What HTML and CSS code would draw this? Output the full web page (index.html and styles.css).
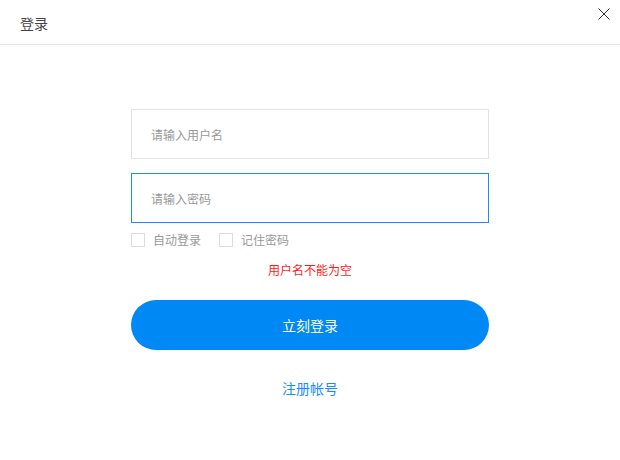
FILE: index.html
```html
<!DOCTYPE html>
<html lang="zh-CN">
<head>
<meta charset="utf-8">
<title>登录</title>
<link rel="stylesheet" href="styles.css">
</head>
<body>
<div class="dialog">
  <header class="dialog-header">
    <span class="dialog-title">登录</span>
    <button class="close-btn" aria-label="关闭">
      <svg width="12" height="12" viewBox="0 0 12 12"><path d="M0.5 0.5L11.5 11.5M11.5 0.5L0.5 11.5" stroke="#333" stroke-width="1" fill="none"/></svg>
    </button>
  </header>
  <form class="login-form">
    <input class="field" type="text" placeholder="请输入用户名">
    <input class="field field-active" type="password" placeholder="请输入密码">
    <div class="options">
      <label class="check"><span class="box"></span>自动登录</label>
      <label class="check"><span class="box"></span>记住密码</label>
    </div>
    <p class="error">用户名不能为空</p>
    <button type="button" class="submit">立刻登录</button>
    <a class="register" href="#">注册帐号</a>
  </form>
</div>
</body>
</html>
```
FILE: styles.css
```css
* { box-sizing: border-box; }
html, body {
  margin: 0;
  padding: 0;
  background: #fff;
  font-family: "Noto Sans CJK SC", "Microsoft YaHei", sans-serif;
}
.dialog {
  width: 620px;
  height: 460px;
  position: relative;
}
.dialog-header {
  height: 45px;
  border-bottom: 1px solid #e6e6e6;
  display: flex;
  align-items: center;
  padding-left: 20px;
}
.dialog-title {
  font-size: 14px;
  color: #444;
  line-height: 20px;
  margin-top: 2px;
}
.close-btn {
  position: absolute;
  top: 8px;
  right: 10px;
  width: 12px;
  height: 12px;
  padding: 0;
  border: 0;
  background: none;
  display: block;
}
.close-btn svg { display: block; }
.login-form {
  width: 358px;
  margin: 64px auto 0;
  display: flex;
  flex-direction: column;
}
.field {
  height: 50px;
  border: 1px solid #e3e3e3;
  padding: 0 0 0 19px;
  font-size: 12px;
  font-family: inherit;
  color: #333;
  outline: none;
  margin: 0;
}
.field::placeholder { color: #999; }
.field + .field { margin-top: 14px; }
.field-active { border-color: #1a8cff; }
.options {
  display: flex;
  gap: 18px;
  margin-top: 10px;
  height: 14px;
  align-items: center;
}
.check {
  display: flex;
  align-items: center;
  gap: 8px;
  font-size: 12px;
  color: #999;
  line-height: 14px;
}
.box {
  width: 14px;
  height: 14px;
  border: 1px solid #dcdcdc;
  background: #fff;
}
.error {
  margin: 16px 0 0;
  text-align: center;
  font-size: 12px;
  line-height: 14px;
  color: #ff1a1a;
}
.submit {
  margin-top: 23px;
  height: 50px;
  border: 0;
  border-radius: 25px;
  background: #0088f5;
  color: #fff;
  font-size: 14px;
  font-family: inherit;
  padding: 0;
}
.register {
  margin-top: 30px;
  align-self: center;
  font-size: 14px;
  line-height: 16px;
  color: #1a8cff;
  text-decoration: none;
}
```
